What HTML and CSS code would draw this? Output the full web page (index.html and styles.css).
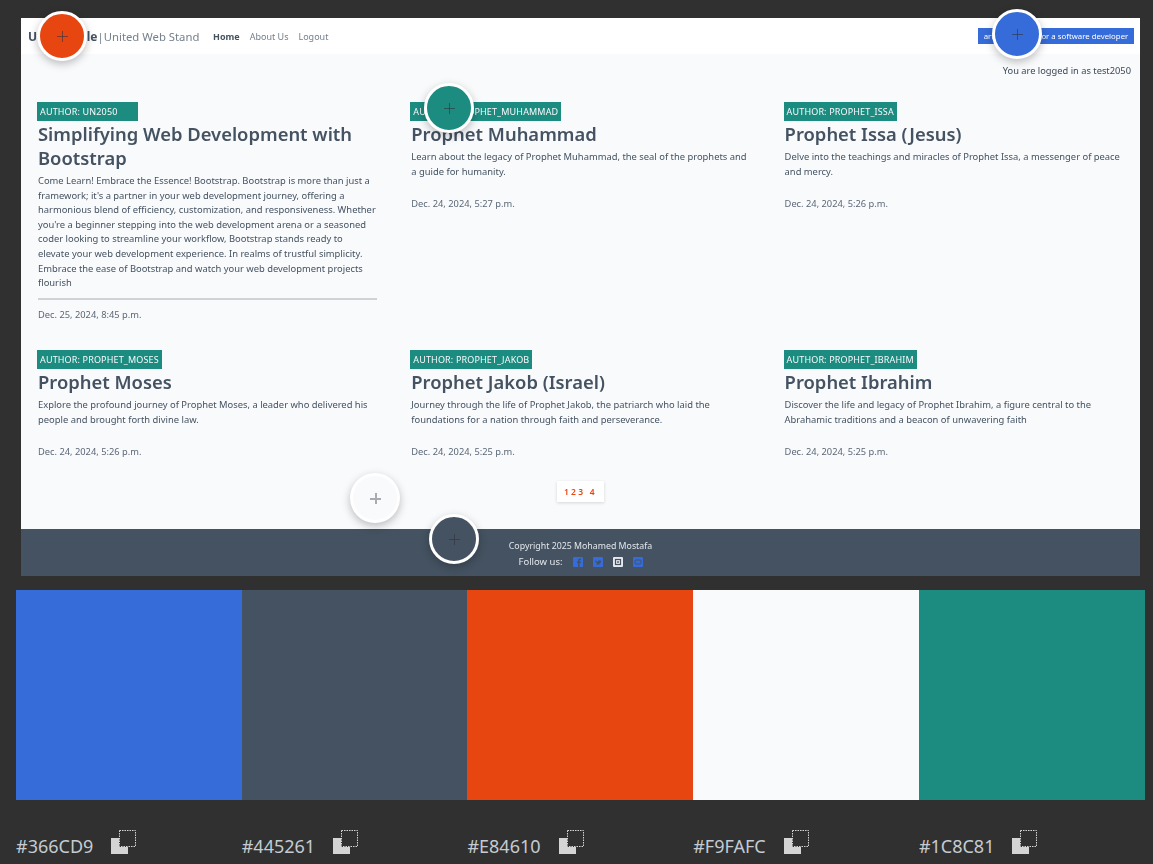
FILE: index.html
```html
<!DOCTYPE html>
<html lang="en">
<head>
<meta charset="utf-8">
<title>Palette</title>
<link rel="stylesheet" href="styles.css">
</head>
<body>
<div class="board">
  <div class="shot">
    <header class="nav">
      <span class="brand"><b>Unbeatable</b>|United Web Stand</span>
      <nav class="links"><a class="active">Home</a><a>About Us</a><a>Logout</a></nav>
      <span class="promo">articles by and for a software developer</span>
    </header>
    <main class="main">
      <p class="logged">You are logged in as test2050</p>
      <section class="grid">
        <article class="card first">
          <span class="badge wide">Author: un2050</span>
          <h2>Simplifying Web Development with Bootstrap</h2>
          <p class="text">Come Learn! Embrace the Essence! Bootstrap. Bootstrap is more than just a<br>framework; it's a partner in your web development journey, offering a<br>harmonious blend of efficiency, customization, and responsiveness. Whether<br>you're a beginner stepping into the web development arena or a seasoned<br>coder looking to streamline your workflow, Bootstrap stands ready to<br>elevate your web development experience. In realms of trustful simplicity.<br>Embrace the ease of Bootstrap and watch your web development projects<br>flourish</p>
          <time>Dec. 25, 2024, 8:45 p.m.</time>
        </article>
        <article class="card">
          <span class="badge">Author: prophet_muhammad</span>
          <h2>Prophet Muhammad</h2>
          <p class="text">Learn about the legacy of Prophet Muhammad, the seal of the prophets and a guide for humanity.</p>
          <time>Dec. 24, 2024, 5:27 p.m.</time>
        </article>
        <article class="card">
          <span class="badge">Author: prophet_issa</span>
          <h2>Prophet Issa (Jesus)</h2>
          <p class="text">Delve into the teachings and miracles of Prophet Issa, a messenger of peace and mercy.</p>
          <time>Dec. 24, 2024, 5:26 p.m.</time>
        </article>
        <article class="card">
          <span class="badge">Author: prophet_moses</span>
          <h2>Prophet Moses</h2>
          <p class="text">Explore the profound journey of Prophet Moses, a leader who delivered his people and brought forth divine law.</p>
          <time>Dec. 24, 2024, 5:26 p.m.</time>
        </article>
        <article class="card">
          <span class="badge">Author: prophet_jakob</span>
          <h2>Prophet Jakob (Israel)</h2>
          <p class="text">Journey through the life of Prophet Jakob, the patriarch who laid the foundations for a nation through faith and perseverance.</p>
          <time>Dec. 24, 2024, 5:25 p.m.</time>
        </article>
        <article class="card">
          <span class="badge">Author: prophet_ibrahim</span>
          <h2>Prophet Ibrahim</h2>
          <p class="text">Discover the life and legacy of Prophet Ibrahim, a figure central to the Abrahamic traditions and a beacon of unwavering faith</p>
          <time>Dec. 24, 2024, 5:25 p.m.</time>
        </article>
      </section>
      <div class="pager"><span class="pages">1 2 3 &nbsp;&nbsp;4</span></div>
    </main>
    <footer class="foot">
      <p class="copyright">Copyright 2025 Mohamed Mostafa</p>
      <div class="follow">
        <span>Follow us:</span>
        <svg class="soc" viewBox="0 0 10 10"><rect width="10" height="10" rx="1" fill="#366cd9"/><path d="M6.6 10V6h1.2l.2-1.5H6.6v-.9c0-.5.2-.7.7-.7H8V1.6h-1c-1.200 0-1.900.7-1.900 1.900v1H4V6h1.100v4z" fill="#445261"/></svg>
        <svg class="soc" viewBox="0 0 10 10"><rect width="10" height="10" rx="1" fill="#366cd9"/><path d="M2 3c1 1.100 2 1.700 3 1.800C5 3.400 6.600 2.700 7.500 3.700L8.500 3.400 8 4.300c0 2.500-2.400 4.300-5.500 3.200 1 0 1.500-.3 2-.7C3.500 6.500 2.300 5 2 3z" fill="#445261"/></svg>
        <svg class="soc" viewBox="0 0 10 10"><rect width="10" height="10" rx="1" fill="#e6eaf0"/><rect x="2.500" y="2.500" width="5" height="5" fill="none" stroke="#445261" stroke-width="1.200"/><rect x="4.200" y="4.200" width="1.600" height="1.600" fill="#445261"/></svg>
        <svg class="soc" viewBox="0 0 10 10"><rect width="10" height="10" rx="1" fill="#366cd9"/><rect x="2" y="3" width="6" height="4" rx="1" fill="none" stroke="#445261"/></svg>
      </div>
    </footer>
  </div>

  <section class="swatches">
    <div class="swatch blue"></div>
    <div class="swatch slate"></div>
    <div class="swatch orange"></div>
    <div class="swatch light"></div>
    <div class="swatch teal"></div>
  </section>
  <section class="labels">
    <div class="label"><span>#366CD9</span><svg class="copy" viewBox="0 0 26 26"><path d="M0 9h8v9h9v7H0z" fill="#d4d4d4"/><rect x="8.500" y="1.500" width="16" height="16" fill="none" stroke="#d4d4d4" stroke-dasharray="1.500 1"/></svg></div>
    <div class="label"><span>#445261</span><svg class="copy" viewBox="0 0 26 26"><path d="M0 9h8v9h9v7H0z" fill="#d4d4d4"/><rect x="8.500" y="1.500" width="16" height="16" fill="none" stroke="#d4d4d4" stroke-dasharray="1.500 1"/></svg></div>
    <div class="label"><span>#E84610</span><svg class="copy" viewBox="0 0 26 26"><path d="M0 9h8v9h9v7H0z" fill="#d4d4d4"/><rect x="8.500" y="1.500" width="16" height="16" fill="none" stroke="#d4d4d4" stroke-dasharray="1.500 1"/></svg></div>
    <div class="label"><span>#F9FAFC</span><svg class="copy" viewBox="0 0 26 26"><path d="M0 9h8v9h9v7H0z" fill="#d4d4d4"/><rect x="8.500" y="1.500" width="16" height="16" fill="none" stroke="#d4d4d4" stroke-dasharray="1.500 1"/></svg></div>
    <div class="label"><span>#1C8C81</span><svg class="copy" viewBox="0 0 26 26"><path d="M0 9h8v9h9v7H0z" fill="#d4d4d4"/><rect x="8.500" y="1.500" width="16" height="16" fill="none" stroke="#d4d4d4" stroke-dasharray="1.500 1"/></svg></div>
  </section>

  <div class="pin pin-orange"><i class="cross"></i></div>
  <div class="pin pin-blue"><i class="cross"></i></div>
  <div class="pin pin-teal"><i class="cross"></i></div>
  <div class="pin pin-light"><i class="cross"></i></div>
  <div class="pin pin-slate"><i class="cross"></i></div>
</div>
</body>
</html>
```

FILE: styles.css
```css
* { box-sizing: border-box; }
html, body { margin: 0; height: 100%; }
body { background: #303030; font-family: "Noto Sans", "Open Sans", sans-serif; overflow: hidden; }
p, h2 { margin: 0; }

.board { position: relative; width: 1153px; height: 864px; padding-top: 18px; }

.shot { width: 1119px; height: 558px; margin-left: 21px; background: #f9fafc; display: flex; flex-direction: column; filter: blur(0.5px); }

.nav { height: 36px; background: #fff; display: flex; align-items: center; padding: 0 6px 0 7px; color: #445261; }
.brand { font-size: 11.300px; color: #75808c; width: 171px; white-space: nowrap; }
.brand b { color: #445261; font-size: 12px; }
.links { display: flex; gap: 10px; margin-left: 14px; font-size: 9px; color: #75808c; }
.links .active { color: #445261; font-weight: 700; }
.promo { margin-left: auto; width: 156px; height: 16px; line-height: 16px; background: #366cd9; color: #fff; font-size: 7.800px; white-space: nowrap; text-align: center; }

.main { flex: 1; padding: 0 16px; }
.logged { text-align: right; font-size: 9.300px; line-height: 14px; color: #3c4856; margin: 10px -7px 0 0; height: 14px; }
.grid { display: grid; grid-template-columns: repeat(3, 340px); column-gap: 33.300px; row-gap: 28px; margin-top: 24px; }

.card { color: #445261; min-width: 0; }
.badge { display: block; width: max-content; height: 19px; line-height: 19px; background: #1c8c81; color: #f9fafc; font-size: 9px; letter-spacing: .15px; text-transform: uppercase; padding: 0 3px; }
.badge.wide { width: 101px; }
h2 { font-size: 18.400px; line-height: 24px; font-weight: 600; margin: 1px 0 0 1px; color: #445261; }
.text { font-size: 9.400px; line-height: 14.600px; margin: 4px 0 0 1px; padding-bottom: 7px; border-bottom: 2px solid transparent; color: #445261; }
.first .text { border-bottom-color: #cfd2d6; white-space: nowrap; }
time { display: block; font-size: 9.300px; line-height: 14px; margin: 8.500px 0 0 1px; color: #5b6776; }

.pager { display: flex; justify-content: center; margin-top: 22px; }
.pages { width: 47px; height: 21px; line-height: 21px; background: #fff; box-shadow: 0 1px 3px rgba(0,0,0,.15); color: #e84610; font-size: 8.500px; font-weight: 600; padding-left: 7px; }

.foot { height: 47px; background: #445261; color: #e3e7ec; font-size: 9.500px; display: flex; flex-direction: column; align-items: center; padding-top: 10px; line-height: 14px; }
.copyright { font-size: 8.800px; }
.follow { display: flex; align-items: center; gap: 10px; margin-top: 2px; }
.soc { width: 10px; height: 10px; }

.swatches { display: flex; margin: 14px 0 0 16px; width: 1128.600px; height: 210px; }
.swatch { flex: 1; }
.blue { background: #366cd9; }
.slate { background: #445261; }
.orange { background: #e84610; }
.light { background: #f9fafc; }
.teal { background: #1c8c81; }

.labels { display: flex; margin: 33px 0 0 16px; width: 1128.600px; }
.label { flex: 1; display: flex; align-items: flex-start; gap: 18px; color: #c5cbd0; font-size: 18px; line-height: 26px; }
.copy { width: 26px; height: 26px; margin-top: -4px; }

.pin { position: absolute; width: 50px; height: 50px; border-radius: 50%; border: 3px solid #fff; box-shadow: 0 3px 9px rgba(0,0,0,.25); display: flex; align-items: center; justify-content: center; }
.pin-orange { left: 37px; top: 11px; background: #e84610; }
.pin-blue { left: 992px; top: 9px; background: #366cd9; }
.pin-teal { left: 424px; top: 83px; background: #1c8c81; }
.pin-light { left: 350px; top: 473px; background: #f9fafc; }
.pin-slate { left: 429px; top: 514px; background: #445261; }
.cross { position: relative; display: block; width: 11px; height: 11px; }
.cross::before, .cross::after { content: ""; position: absolute; background: rgba(50,50,60,.6); }
.cross::before { left: 0; right: 0; top: 5px; height: 1px; }
.cross::after { top: 0; bottom: 0; left: 5px; width: 1px; }
.pin-light .cross::before, .pin-light .cross::after { background: #a9abb0; }
.pin-light .cross::before { height: 2px; }
.pin-light .cross::after { width: 2px; }
```
